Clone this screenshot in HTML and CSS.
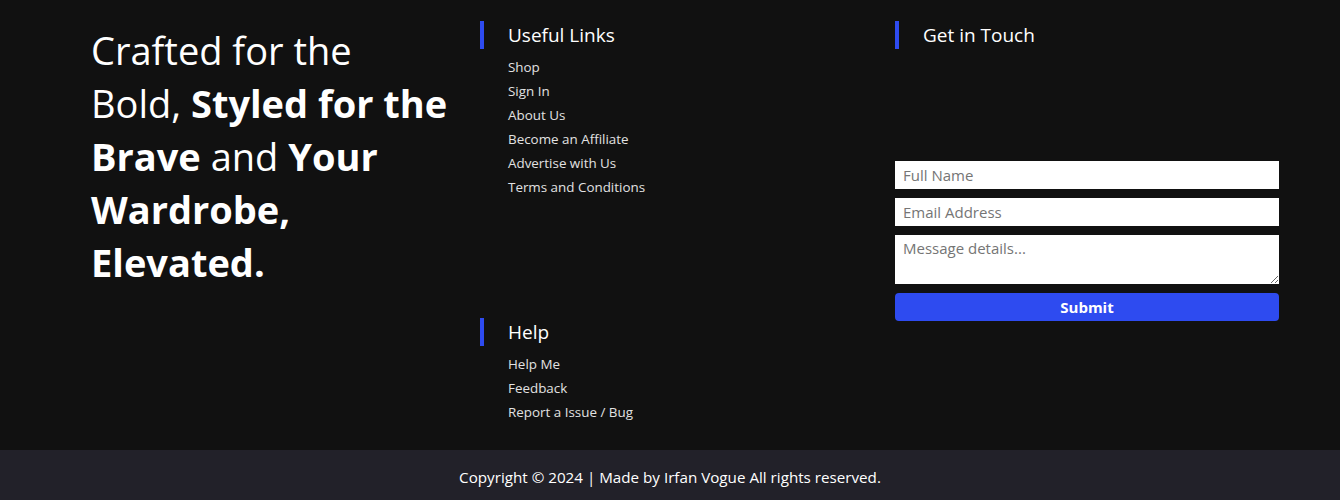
FILE: index.html
```html
<!DOCTYPE html>
<html lang="en">
<head>
<meta charset="utf-8">
<title>Footer</title>
<link rel="stylesheet" href="styles.css">
</head>
<body>
<footer class="site-footer">
  <div class="footer-main">
    <div class="col col-brand">
      <h2 class="tagline"><span>Crafted for the</span> <span>Bold,</span> <b>Styled for the</b> <b>Brave</b> <span>and</span> <b>Your</b> <b>Wardrobe,</b> <b>Elevated.</b></h2>
    </div>
    <div class="col col-links">
      <div class="link-group">
        <h3 class="col-title">Useful Links</h3>
        <ul class="link-list">
          <li><a href="#">Shop</a></li>
          <li><a href="#">Sign In</a></li>
          <li><a href="#">About Us</a></li>
          <li><a href="#">Become an Affiliate</a></li>
          <li><a href="#">Advertise with Us</a></li>
          <li><a href="#">Terms and Conditions</a></li>
        </ul>
      </div>
      <div class="link-group help-group">
        <h3 class="col-title">Help</h3>
        <ul class="link-list">
          <li><a href="#">Help Me</a></li>
          <li><a href="#">Feedback</a></li>
          <li><a href="#">Report a Issue / Bug</a></li>
        </ul>
      </div>
    </div>
    <div class="col col-contact">
      <h3 class="col-title">Get in Touch</h3>
      <form class="contact-form">
        <input type="text" placeholder="Full Name">
        <input type="email" placeholder="Email Address">
        <textarea placeholder="Message details..."></textarea>
        <button type="button">Submit</button>
      </form>
    </div>
  </div>
  <div class="footer-bottom">Copyright © 2024 | Made by Irfan Vogue All rights reserved.</div>
</footer>
</body>
</html>
```
FILE: styles.css
```css
* { box-sizing: border-box; }
html, body { margin: 0; padding: 0; background: #111111; }
body { font-family: "Open Sans", "Noto Sans", sans-serif; color: #fff; }

.footer-main {
  display: grid;
  grid-template-columns: 389px 415px 384px;
  padding: 21px 0 0 91px;
  height: 450px;
}

.tagline {
  margin: 3px 0 0;
  font-size: 38px;
  line-height: 53px;
  font-weight: 400;
  color: #fff;
  width: 360px;
}
.tagline b { font-weight: 700; }

.col-title {
  margin: 0;
  border-left: 4px solid #2e4bf0;
  padding-left: 24px;
  font-size: 19px;
  line-height: 28px;
  font-weight: 400;
  color: #fff;
}

.link-list {
  list-style: none;
  margin: 6px 0 0;
  padding: 0 0 0 28px;
}
.link-list li { line-height: 24px; font-size: 13.4px; }
.link-list a { color: #e2e2e2; text-decoration: none; }

.help-group { margin-top: 119px; }

.contact-form {
  margin-top: 112px;
  display: flex;
  flex-direction: column;
  gap: 9px;
}
.contact-form input,
.contact-form textarea {
  width: 384px;
  border: none;
  background: #fff;
  font-family: inherit;
  font-size: 15px;
  padding: 0 8px;
  margin: 0;
  color: #333;
}
.contact-form input { height: 28px; }
.contact-form textarea { height: 49px; padding-top: 3px; resize: vertical; display: block; }
.contact-form ::placeholder { color: #757575; }
.contact-form button {
  height: 28px;
  border: none;
  border-radius: 4px;
  background: #2e4bf0;
  color: #fff;
  font-family: inherit;
  font-weight: 700;
  font-size: 15px;
}

.footer-bottom {
  height: 50px;
  padding-top: 3px;
  background: #222129;
  display: flex;
  align-items: center;
  justify-content: center;
  font-size: 15.2px;
  color: #fff;
}
```
